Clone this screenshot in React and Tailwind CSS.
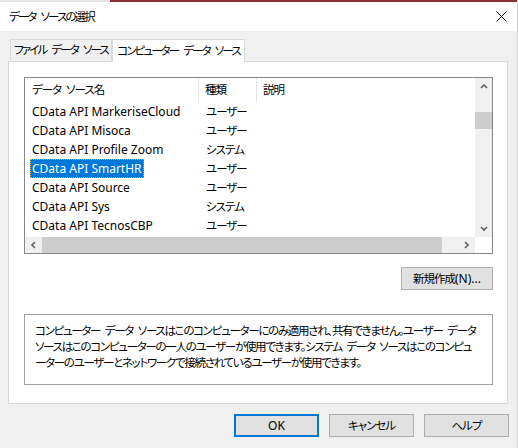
import React from 'react';

const rows = [
  { name: 'CData API MarkeriseCloud', kind: 'ユーザー' },
  { name: 'CData API Misoca', kind: 'ユーザー' },
  { name: 'CData API Profile Zoom', kind: 'システム' },
  { name: 'CData API SmartHR', kind: 'ユーザー', selected: true },
  { name: 'CData API Source', kind: 'ユーザー' },
  { name: 'CData API Sys', kind: 'システム' },
  { name: 'CData API TecnosCBP', kind: 'ユーザー' },
];

// japanese text in the dialog is set tighter than the latin text
const jp = 'text-[11.5px] tracking-[-1px] [word-spacing:3px] whitespace-nowrap';
const jpTight = 'text-[11.5px] tracking-[-1.9px] [word-spacing:4px] whitespace-nowrap';

function Chevron({ dir }) {
  // small windows-style scroll arrow
  const paths = {
    up: 'M1 5 L4 2 L7 5',
    down: 'M1 2 L4 5 L7 2',
    left: 'M5 1 L2 4 L5 7',
    right: 'M2 1 L5 4 L2 7',
  };
  return (
    <svg width="8" height="8" viewBox="0 0 8 8">
      <path d={paths[dir]} fill="none" stroke="#606060" strokeWidth="1.6" />
    </svg>
  );
}

function Button({ children, primary, width = 'w-[85px]' }) {
  return (
    <div
      className={`${width} h-[23px] flex items-center justify-center bg-[#e1e1e1] text-black whitespace-nowrap ${
        primary ? 'border-2 border-[#0078d7]' : 'border border-[#adadad]'
      }`}
    >
      {children}
    </div>
  );
}

export default function App() {
  return (
    <div className="w-[518px] h-[448px] flex bg-[#f0f0f0] overflow-hidden text-black text-[12px] font-['Noto_Sans','Noto_Sans_CJK_JP',sans-serif] [font-feature-settings:'palt'] leading-none">
      <div className="w-[517px] h-full flex flex-col">
        {/* strip of the window behind */}
        <div className="h-[2px] flex">
          <div className="w-[110px] bg-[#e6e6e6]" />
          <div className="flex-1 bg-[#8e2f2f]" />
        </div>

        {/* title bar */}
        <div className="h-[29px] bg-white flex items-center justify-between pl-[9px] pr-[10px]">
          <span className={jpTight}>データ ソースの選択</span>
          <svg width="11" height="11" viewBox="0 0 11 11">
            <path d="M0.5 0.5 L10.5 10.5 M10.5 0.5 L0.5 10.5" stroke="#000" strokeWidth="1" />
          </svg>
        </div>

        {/* tabs */}
        <div className="flex items-end pl-[10px] mt-[8px] relative z-10">
          <div className="w-[102px] h-[21px] border border-b-0 border-[#d9d9d9] bg-[#f0f0f0] flex items-center justify-center mb-px">
            <span className={jpTight}>ファイル データ ソース</span>
          </div>
          <div className="w-[133px] h-[23px] border border-b-0 border-[#d9d9d9] bg-white flex items-center justify-center -mb-px">
            <span className={jpTight}>コンピューター データ ソース</span>
          </div>
        </div>

        {/* tab panel */}
        <div className="ml-[8px] w-[500px] h-[343px] border border-[#d9d9d9] bg-white pl-[15px] pt-[15px]">
          {/* list view */}
          <div className="w-[469px] h-[177px] border border-[#828790] flex flex-col">
            <div className="flex h-[159px]">
              <div className="w-[450px] flex flex-col">
                <div className="h-[24px] flex items-center">
                  <div className="w-[174px] pl-[7px] h-full flex items-center border-r border-[#e5e5e5]">
                    <span className={jp}>データ ソース名</span>
                  </div>
                  <div className="w-[58px] pl-[6px] h-full flex items-center border-r border-[#e5e5e5]">
                    <span className={jp}>種類</span>
                  </div>
                  <div className="pl-[6px]">
                    <span className={jp}>説明</span>
                  </div>
                </div>
                {rows.map((r) => (
                  <div key={r.name} className="h-[19px] flex items-center">
                    <div className="w-[175px] pl-[5px] h-full flex items-center">
                      <span
                        className={`h-[19px] px-[2px] flex items-center whitespace-nowrap ${
                          r.selected ? 'bg-[#0078d7] text-white outline-1 outline-dotted outline-[#f0a040] -outline-offset-1' : ''
                        }`}
                      >
                        {r.name}
                      </span>
                    </div>
                    <div className="pl-[6px]">
                      <span className={jp}>{r.kind}</span>
                    </div>
                  </div>
                ))}
              </div>
              {/* vertical scrollbar */}
              <div className="w-[17px] h-full bg-[#f0f0f0] flex flex-col">
                <div className="h-[17px] flex items-center justify-center">
                  <Chevron dir="up" />
                </div>
                <div className="h-[17px]" />
                <div className="h-[17px] bg-[#cdcdcd]" />
                <div className="flex-1" />
                <div className="h-[17px] flex items-center justify-center">
                  <Chevron dir="down" />
                </div>
              </div>
            </div>
            {/* horizontal scrollbar */}
            <div className="flex h-[16px]">
              <div className="w-[450px] bg-[#f0f0f0] flex items-center">
                <div className="w-[17px] flex items-center justify-center">
                  <Chevron dir="left" />
                </div>
                <div className="w-[400px] h-full bg-[#cdcdcd]" />
                <div className="flex-1" />
                <div className="w-[17px] flex items-center justify-center">
                  <Chevron dir="right" />
                </div>
              </div>
              <div className="flex-1 bg-white" />
            </div>
          </div>

          <div className="w-[469px] flex justify-end mt-[13px]">
            <Button width="w-[92px]">
              <span className={jp}>新規作成</span>
              <span>(N)...</span>
            </Button>
          </div>

          {/* description */}
          <div className="w-[469px] h-[71px] mt-[24px] border border-[#a0a0a0] pl-[10px] pt-[8px] text-[11.5px] tracking-[-1.3px] [word-spacing:3px] leading-[16px] whitespace-nowrap">
            コンピューター データ ソースはこのコンピューターにのみ適用され、共有できません。ユーザー データ
            <br />
            ソースはこのコンピューターの一人のユーザーが使用できます。システム データ ソースはこのコンピュ
            <br />
            ーターのユーザーとネットワークで接続されているユーザーが使用できます。
          </div>
        </div>

        {/* dialog buttons */}
        <div className="flex justify-end gap-[10px] pr-[8px] mt-[10px]">
          <Button primary>OK</Button>
          <Button>
            <span className={jp}>キャンセル</span>
          </Button>
          <Button>
            <span className={jp}>ヘルプ</span>
          </Button>
        </div>
      </div>
      <div className="w-px h-full bg-[#d6d6d6]" />
    </div>
  );
}
